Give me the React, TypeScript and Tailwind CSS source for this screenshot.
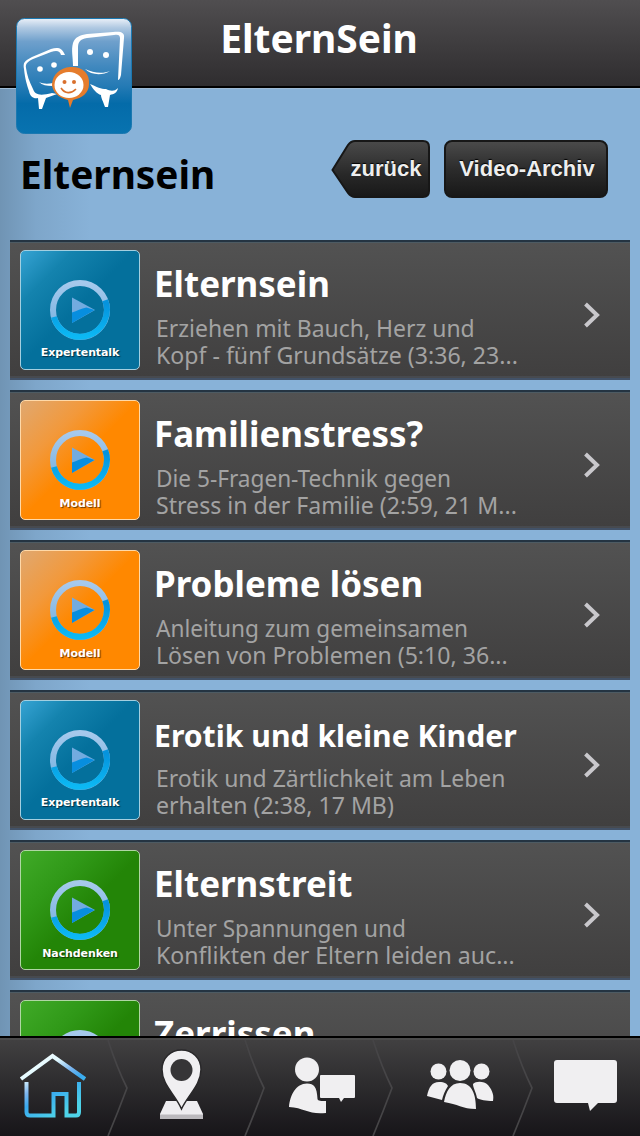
import React, { useId } from "react";

type Video = {
  title: string;
  lines: string[];
  kind: keyof typeof kinds;
  titleClass?: string;
  introClass?: string;
};

const kinds = {
  Expertentalk: {
    bg: "bg-[linear-gradient(135deg,#36a3d3_0%,#1483ae_22%,#04709c_48%,#04709c_100%)] border-[#a3cfe0]",
    label: "top-[95px]",
  },
  Modell: {
    bg: "bg-[linear-gradient(135deg,#e0a870_0%,#f2993c_28%,#ff8800_50%,#ff8800_100%)] border-[#ffd9a8]",
    label: "top-[96px]",
  },
  Nachdenken: {
    bg: "bg-[linear-gradient(135deg,#40aa28_0%,#309918_28%,#238507_52%,#238507_100%)] border-[#b0d6a4]",
    label: "top-[96px]",
  },
};

const videos: Video[] = [
  {
    title: "Elternsein",
    lines: ["Erziehen mit Bauch, Herz und", "Kopf - fünf Grundsätze (3:36, 23..."],
    kind: "Expertentalk",
    introClass: "scale-x-[0.956]",
  },
  {
    title: "Familienstress?",
    lines: ["Die 5-Fragen-Technik gegen", "Stress in der Familie (2:59, 21 M..."],
    kind: "Modell",
  },
  {
    title: "Probleme lösen",
    lines: ["Anleitung zum gemeinsamen", "Lösen von Problemen (5:10, 36..."],
    kind: "Modell",
  },
  {
    title: "Erotik und kleine Kinder",
    lines: ["Erotik und Zärtlichkeit am Leben", "erhalten (2:38, 17 MB)"],
    kind: "Expertentalk",
    titleClass: "text-[31px] scale-x-[0.973] leading-[55px] mb-px",
    introClass: "scale-x-[0.957]",
  },
  {
    title: "Elternstreit",
    lines: ["Unter Spannungen und", "Konflikten der Eltern leiden auc..."],
    kind: "Nachdenken",
  },
  {
    title: "Zerrissen",
    lines: [],
    kind: "Nachdenken",
  },
];

const Logo = () => (
  <svg className="absolute left-4 top-[18px] z-10" width="116" height="116" viewBox="0 0 116 116" fill="none">
    <defs>
      <linearGradient id="logo-bg" x1="0" y1="0" x2="0" y2="1">
        <stop offset="0" stopColor="#eaf0f8" />
        <stop offset="0.08" stopColor="#b0c9e2" />
        <stop offset="0.2" stopColor="#6fa0cc" />
        <stop offset="0.42" stopColor="#4088be" />
        <stop offset="0.58" stopColor="#267bb5" />
        <stop offset="0.74" stopColor="#046ba9" />
        <stop offset="1" stopColor="#0873b0" />
      </linearGradient>
    </defs>
    <rect x="0.5" y="0.5" width="115" height="115" rx="8" fill="url(#logo-bg)" stroke="#1b78b0" />
    <g fill="#fff">
      {/* Left speech face */}
      <path d="M49 37 C46 29 41 29 35 31 L16 39 C8 43 7 45 8 51 C9 61 11 67 13 73 C14 79 18 81 22 80 L23 91 L26 91 L30 80 L41 76 L36 75 C24 78 19 77 17 71 C13 63 11 57 10 50 C9 45 13 43 17 41 L35 34 C41 32 44 33 45 37 Z" />
      {/* Right speech face */}
      <path d="M57 48 C57 39 55 32 57 25 C59 19 64 17 71 16 L97 14 C104 13 109 14 108 20 L105 57 C104 61 103 62 102 62 L104 20 C104 17 102 16 98 17 L71 20 C64 21 62 24 62 30 L62 48 Z" />
      <path d="M74 66 C81 69 85 71 90 71 C94 73 98 74 102 70 C101 75 98 76 94 77 L92 89 L89 89 C87 83 85 80 85 77 C81 76 77 71 74 66Z" />
      <circle cx="74" cy="34" r="3" />
      <circle cx="90" cy="37" r="3" />
      <circle cx="24" cy="51" r="2.8" />
      <circle cx="38" cy="47" r="2.8" />
      <path d="M69 51 C77 55 87 56 94 53 C86 58 75 57 69 51Z" />
      <path d="M23 64 C27 66 32 66 37 65 L36 68 C31 68 26 67 23 64Z" />
    </g>
    <path d="M54 49 C66 48 74 55 73 66 C73 75 66 80 57 82 L54 90 L52 82 C43 80 36 74 36 66 C37 56 44 50 54 49Z" fill="#e57c2c" />
    <ellipse cx="53" cy="67" rx="14.5" ry="13" fill="#fff" />
    <circle cx="48.5" cy="64" r="2" fill="#d9702d" />
    <circle cx="58" cy="64" r="2" fill="#d9702d" />
    <path d="M45 70 C49 76 55 76 60 71" stroke="#d9702d" strokeWidth="1.6" />
  </svg>
);

const PlayIcon = () => {
  const id = useId();
  return (
    <svg className="absolute left-[28px] top-[28px]" width="62" height="62" viewBox="0 0 62 62" fill="none">
      <defs>
        <linearGradient id={id + "ring"} x1="0" y1="0" x2="0" y2="1">
          <stop offset="0" stopColor="#a6c9ec" />
          <stop offset="1" stopColor="#70aedf" />
        </linearGradient>
        <linearGradient id={id + "low"} x1="0" y1="0" x2="0" y2="1">
          <stop offset="0.1" stopColor="#0593dd" />
          <stop offset="1" stopColor="#0cb9f4" />
        </linearGradient>
      </defs>
      <circle cx="31" cy="31" r="27" stroke={`url(#${id}ring)`} strokeWidth="6" />
      <path d="M4.9 38 A27 27 0 1 0 56.2 21.3" stroke={`url(#${id}low)`} strokeWidth="6" />
      <path d="M23 18.5 L46 31 L23 44Z" fill="#72abe0" />
      <path d="M23 33.5 C28 32 32 29.5 37.5 28.5 L45.5 31 L23 44Z" fill="#078edf" />
    </svg>
  );
};

const VideoRow = ({
  title,
  lines,
  kind,
  titleClass = "text-[36.5px] scale-x-[0.957] leading-[50px] mb-[6px]",
  introClass = "scale-x-[0.942]",
}: Video) => (
  <article className="h-[140px] shrink-0 flex border-t-2 border-b-2 border-t-[#243442] border-b-[#425268] bg-linear-to-b from-[#525252] to-[#403f3f] shadow-[inset_0_1px_0_#4d5b63,inset_0_-2px_0_#474a4f]">
    <div className={`relative size-[120px] shrink-0 ml-[10px] mt-2 rounded-[5px] border ${kinds[kind].bg}`}>
      <PlayIcon />
      <p className={`absolute inset-x-0 text-center font-['DejaVu_Sans'] font-bold text-[11px] tracking-[-0.1px] leading-[14px] text-white [text-shadow:1px_1px_1px_#0009] ${kinds[kind].label}`}>
        {kind}
      </p>
    </div>
    <div className="w-[420px] ml-[14px] pt-[16px] whitespace-nowrap">
      <h2 className={`origin-left font-bold text-white ${titleClass}`}>{title}</h2>
      <div className="ml-[2px] text-[24px] leading-[27px] text-[#a3a3a3]">
        {lines.map((line, i) => (
          <p key={line} className={`origin-left ${i === 0 ? introClass : "scale-x-[0.963]"}`}>
            {line}
          </p>
        ))}
      </div>
    </div>
    <svg className="ml-[9px] mt-[59px]" width="20" height="28" viewBox="0 0 20 28" fill="none">
      <path d="M2.5 3 L14 14 L2.5 25" stroke="#c9c8cc" strokeWidth="4" />
    </svg>
  </article>
);

const TabBar = () => (
  <nav className="relative h-[100px] shrink-0 border-t-2 border-black bg-linear-to-b from-[#424142] via-[#2c2b2d] to-[#171519] shadow-[inset_0_2px_0_#4b4b4b]">
    <svg className="block" width="640" height="98" viewBox="0 1038 640 98" fill="none">
      <defs>
        <linearGradient id="house" x1="25" y1="1054" x2="60" y2="1115" gradientUnits="userSpaceOnUse">
          <stop offset="0" stopColor="#fff" />
          <stop offset="0.3" stopColor="#e3faff" />
          <stop offset="0.5" stopColor="#7cb5ef" />
          <stop offset="0.66" stopColor="#39a9ef" />
          <stop offset="1" stopColor="#4ed3e8" />
        </linearGradient>
      </defs>
      {/* Separators */}
      {[108, 245, 373, 513].map((x) => (
        <path key={x} d={`M${x} 1040 Q${x + 9} 1068 ${x + 19} 1088 Q${x + 10} 1112 ${x} 1136`} stroke="#464547" strokeWidth="1.7" />
      ))}
      {/* Home */}
      <path
        d="M21 1079 L52.5 1056 L85 1079 M26.5 1082 V1112 Q26.5 1115.5 30 1115.5 H53.5 V1094 H66.5 V1115.5 H76 Q79 1115.5 79 1112 V1082"
        stroke="url(#house)"
        strokeWidth="4"
      />
      {/* Map pin */}
      <path d="M166 1101 H197 L203 1114 V1119 H160 V1114Z" fill="#eeedf0" />
      <path d="M160 1114.5 H203 V1119 H160Z" fill="#bbb9bd" />
      <path d="M181.5 1109 C175 1094 162 1085 162 1069.5 C162 1058 170.5 1050 181.5 1050 C192.5 1050 201 1058 201 1069.5 C201 1085 188 1095 181.5 1109Z" fill="#f0eff1" stroke="#29282a" strokeWidth="1.5" />
      <circle cx="181.5" cy="1070" r="11" fill="#363537" />
      <g fill="#f0eff1">
        {/* Person with speech bubble */}
        <circle cx="307" cy="1069.5" r="12" />
        <path d="M289 1107 C290 1095 296 1083.5 307 1083.5 C314 1083.5 317 1087 317.5 1099 C318 1101 321 1101 326 1101 V1113 C309 1115 305 1108 289 1107Z" />
        <path d="M321 1075 H354 Q355 1075 355 1076 V1097 Q355 1098 354 1098 H344 L341 1102 L339 1098 H321 Q320 1098 320 1097 V1076 Q320 1075 321 1075Z" />
        {/* Group */}
        <path d="M427 1096 C429 1087 432 1082 439 1082 C445 1082 447 1084 448 1086 C445 1091 443 1095 442 1100Z" />
        <path d="M473 1084 C476 1081 484 1081 488 1085 C493 1091 494 1096 493 1101 C486 1101 480 1100 477 1098 C476 1092 473 1088 473 1084Z" />
        <circle cx="438.5" cy="1071.5" r="8" />
        <circle cx="481.5" cy="1071.5" r="8" />
        <circle cx="460" cy="1070.5" r="10.5" />
        <path d="M444 1102 C446 1092 450 1083 460 1083 C472 1083 476 1094 476 1109 C462 1109 458 1104 444 1102Z" />
        {/* Speech bubble */}
        <path d="M557 1060 H614 Q617 1060 617 1063 V1100 Q617 1103 614 1103 H598 L590 1111 L588 1103 H557 Q554 1103 554 1100 V1063 Q554 1060 557 1060Z" />
      </g>
    </svg>
  </nav>
);

const App = () => {
  return (
    <div className="w-[640px] h-[1136px] flex flex-col overflow-hidden font-['Noto_Sans',sans-serif] bg-[linear-gradient(90deg,#7094b4_0px,#7ea6ca_36px,#88b2d8_90px,#88b2d8_100%)]">
      <header className="relative h-[89px] shrink-0 border-b border-[#9fbbd4]">
        <div className="h-[88px] border-b-2 border-black bg-linear-to-b from-[#504e50] to-[#2f2d2f]">
          <h1 className="pr-[2px] text-center text-[40px] leading-[76px] font-bold text-white scale-x-[0.972]">ElternSein</h1>
        </div>
        <Logo />
      </header>

      <div className="h-[151px] shrink-0 flex items-start pt-[51px] pl-[20px]">
        <h2 className="w-[311px] origin-left text-[40px] leading-[68px] font-bold text-black scale-x-[0.97]">Elternsein</h2>
        <button className="relative w-[100px] h-[58px] pb-[2px] font-['Liberation_Sans'] font-bold text-[22px] text-[#eeeeee] [text-shadow:0_-1px_1px_#000]">
          <svg className="absolute inset-0" width="100" height="58" viewBox="0 0 100 58">
            <defs>
              <linearGradient id="back" x1="0" y1="0" x2="0" y2="1">
                <stop offset="0" stopColor="#4a4a4a" />
                <stop offset="0.6" stopColor="#282828" />
                <stop offset="1" stopColor="#181818" />
              </linearGradient>
            </defs>
            <path d="M24 1 H92 Q98 1 98 7 V51 Q98 57 92 57 H24 Q20 57 17 53 L1.5 30 L17 5 Q20 1 24 1Z" fill="url(#back)" stroke="#171717" strokeWidth="2" />
          </svg>
          <span className="relative left-[5px]">zurück</span>
        </button>
        <button className="ml-[13px] w-[164px] h-[58px] pb-[2px] pl-[2px] rounded-[8px] border-2 border-[#171717] bg-linear-to-b from-[#4a4a4a] via-[#2c2c2c] to-[#181818] font-['Liberation_Sans'] font-bold text-[22px] text-[#eeeeee] [text-shadow:0_-1px_1px_#000]">
          Video-Archiv
        </button>
      </div>

      <main className="flex-1 min-h-0 overflow-hidden flex flex-col gap-[10px] px-[10px]">
        {videos.map((video) => (
          <VideoRow key={video.title} {...video} />
        ))}
      </main>

      <TabBar />
    </div>
  );
};

export default App;
